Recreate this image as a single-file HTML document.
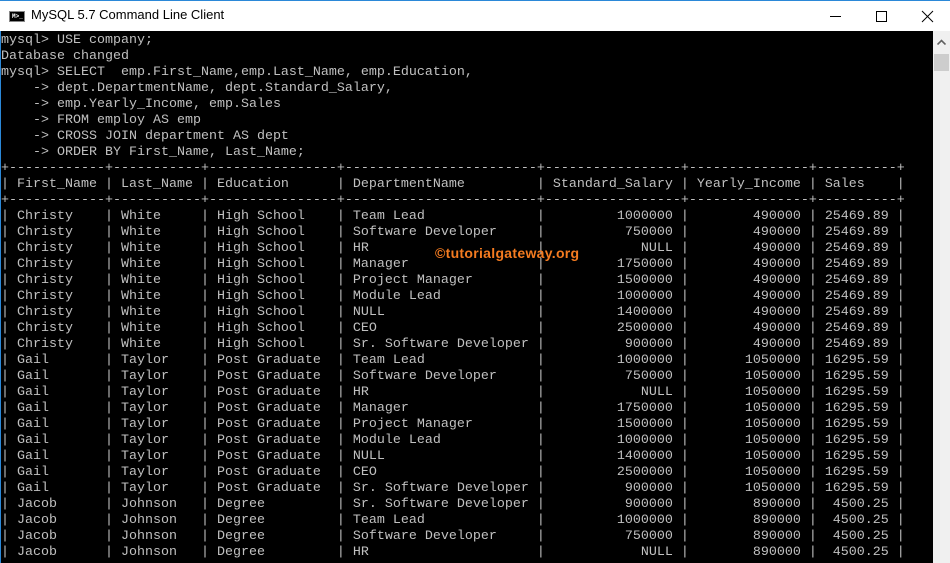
<!DOCTYPE html>
<html><head><meta charset="utf-8"><style>
html,body{margin:0;padding:0;width:950px;height:563px;overflow:hidden;background:#000}
#title{position:absolute;left:0;top:0;width:950px;height:31px;background:#fff;border-top:1px solid #2b88d8;box-sizing:border-box}
#title .t{position:absolute;left:31px;top:6px;font:13px "Liberation Sans",sans-serif;color:#000}
#icon{position:absolute;left:9px;top:10px;width:16px;height:11px;background:#000;border:1px solid #888;box-sizing:border-box}
#icon span{position:absolute;left:2px;top:1px;font:bold 6px "Liberation Mono",monospace;color:#fff;line-height:7px}
#cons{position:absolute;left:0;top:31px;width:933px;height:532px;background:#000;border-left:1px solid #2b88d8;box-sizing:border-box}
pre{margin:0;position:absolute;left:0;top:2px;font-family:"Liberation Mono",monospace;font-size:13.33px;line-height:16px;color:#c0c0c0;white-space:pre}
#sb{position:absolute;left:933px;top:31px;width:17px;height:532px;background:#f0f0f0}
#thumb{position:absolute;left:1px;top:23px;width:15px;height:17px;background:#cdcdcd}
#wm{position:absolute;left:434px;top:214px;font:bold 14px "Liberation Sans",sans-serif;color:#f47b20;letter-spacing:0.3px}
</style></head><body>
<div id="title"><div id="icon"><span>M&gt;_</span></div><div class="t">MySQL 5.7 Command Line Client</div>
<svg style="position:absolute;left:830px;top:8px" width="110" height="16">
<line x1="0" y1="7.5" x2="11" y2="7.5" stroke="#000"/>
<rect x="46.5" y="2.5" width="10" height="10" fill="none" stroke="#000"/>
<line x1="92" y1="2" x2="103" y2="13" stroke="#000"/><line x1="103" y1="2" x2="92" y2="13" stroke="#000"/>
</svg></div>
<div id="cons"><pre>mysql&gt; USE company;
Database changed
mysql&gt; SELECT  emp.First_Name,emp.Last_Name, emp.Education,
    -&gt; dept.DepartmentName, dept.Standard_Salary,
    -&gt; emp.Yearly_Income, emp.Sales
    -&gt; FROM employ AS emp
    -&gt; CROSS JOIN department AS dept
    -&gt; ORDER BY First_Name, Last_Name;
+------------+-----------+----------------+------------------------+-----------------+---------------+----------+
| First_Name | Last_Name | Education      | DepartmentName         | Standard_Salary | Yearly_Income | Sales    |
+------------+-----------+----------------+------------------------+-----------------+---------------+----------+
| Christy    | White     | High School    | Team Lead              |         1000000 |        490000 | 25469.89 |
| Christy    | White     | High School    | Software Developer     |          750000 |        490000 | 25469.89 |
| Christy    | White     | High School    | HR                     |            NULL |        490000 | 25469.89 |
| Christy    | White     | High School    | Manager                |         1750000 |        490000 | 25469.89 |
| Christy    | White     | High School    | Project Manager        |         1500000 |        490000 | 25469.89 |
| Christy    | White     | High School    | Module Lead            |         1000000 |        490000 | 25469.89 |
| Christy    | White     | High School    | NULL                   |         1400000 |        490000 | 25469.89 |
| Christy    | White     | High School    | CEO                    |         2500000 |        490000 | 25469.89 |
| Christy    | White     | High School    | Sr. Software Developer |          900000 |        490000 | 25469.89 |
| Gail       | Taylor    | Post Graduate  | Team Lead              |         1000000 |       1050000 | 16295.59 |
| Gail       | Taylor    | Post Graduate  | Software Developer     |          750000 |       1050000 | 16295.59 |
| Gail       | Taylor    | Post Graduate  | HR                     |            NULL |       1050000 | 16295.59 |
| Gail       | Taylor    | Post Graduate  | Manager                |         1750000 |       1050000 | 16295.59 |
| Gail       | Taylor    | Post Graduate  | Project Manager        |         1500000 |       1050000 | 16295.59 |
| Gail       | Taylor    | Post Graduate  | Module Lead            |         1000000 |       1050000 | 16295.59 |
| Gail       | Taylor    | Post Graduate  | NULL                   |         1400000 |       1050000 | 16295.59 |
| Gail       | Taylor    | Post Graduate  | CEO                    |         2500000 |       1050000 | 16295.59 |
| Gail       | Taylor    | Post Graduate  | Sr. Software Developer |          900000 |       1050000 | 16295.59 |
| Jacob      | Johnson   | Degree         | Sr. Software Developer |          900000 |        890000 |  4500.25 |
| Jacob      | Johnson   | Degree         | Team Lead              |         1000000 |        890000 |  4500.25 |
| Jacob      | Johnson   | Degree         | Software Developer     |          750000 |        890000 |  4500.25 |
| Jacob      | Johnson   | Degree         | HR                     |            NULL |        890000 |  4500.25 |</pre>
<div id="wm">©tutorialgateway.org</div></div>
<div id="sb"><svg style="position:absolute;left:4px;top:8px" width="9" height="6"><path d="M0.5 5.5 L4.5 1.5 L8.5 5.5" fill="none" stroke="#606060" stroke-width="1.6"/></svg><div id="thumb"></div></div>
</body></html>
